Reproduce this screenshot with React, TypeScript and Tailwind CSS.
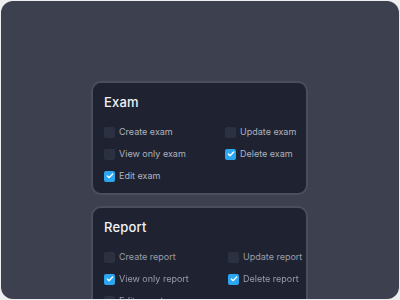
import { Check } from 'lucide-react'

type Perm = { label: string; checked: boolean }

function Box({ checked }: { checked: boolean }) {
  return (
    <span
      className={
        checked
          ? 'flex h-[11px] w-[11px] items-center justify-center rounded-[2px] bg-[#2ba6f0]'
          : 'h-[11px] w-[11px] rounded-[2px] bg-[#2c3142]'
      }
    >
      {checked && <Check className="h-[8px] w-[8px] text-white" strokeWidth={4} />}
    </span>
  )
}

function PermCard({ title, perms, faded }: { title: string; perms: Perm[]; faded?: boolean }) {
  return (
    <div
      className={`ml-[90px] w-[217px] shrink-0 rounded-[10px] border-2 border-[#4a4e5f] bg-[#1f2331] pl-[11px] pt-[11px] pb-[6px] ${faded ? 'blur-[0.4px]' : ''}`}
    >
      <div className="text-[13px] font-medium leading-4 tracking-[0.2px] text-[#f1f2f5]">{title}</div>
      <div className={`mt-[11px] grid ${faded ? 'grid-cols-[124px_1fr]' : 'grid-cols-[121px_1fr]'}`}>
        {perms.map((p) => (
          <div key={p.label} className="flex h-[22px] items-center gap-[4px]">
            <Box checked={p.checked} />
            <span className={`text-[9px] ${faded ? 'text-[#9a9eab]' : 'text-[#aeb2be]'}`}>{p.label}</span>
          </div>
        ))}
      </div>
    </div>
  )
}

export default function App() {
  return (
    <div className="h-[300px] w-[400px] overflow-hidden bg-[#eeeef1] p-[1px] font-['Inter',sans-serif]">
      <div className="flex h-[298px] flex-col gap-[11px] overflow-hidden rounded-[12px] bg-[#3d404f] pt-[80px]">
        <PermCard
          title="Exam"
          perms={[
            { label: 'Create exam', checked: false },
            { label: 'Update exam', checked: false },
            { label: 'View only exam', checked: false },
            { label: 'Delete exam', checked: true },
            { label: 'Edit exam', checked: true },
          ]}
        />
        <PermCard
          title="Report"
          faded
          perms={[
            { label: 'Create report', checked: false },
            { label: 'Update report', checked: false },
            { label: 'View only report', checked: true },
            { label: 'Delete report', checked: true },
            { label: 'Edit report', checked: false },
          ]}
        />
      </div>
    </div>
  )
}
